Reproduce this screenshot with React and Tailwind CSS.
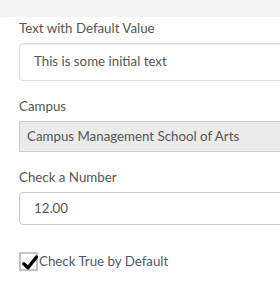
import React from "react";

function App() {
  return (
    <div className="w-[280px] h-[304px] overflow-hidden bg-[#f4f4f4] font-['Lato',sans-serif] text-[13.3px] text-[#555]">
      <div className="mt-[17px] h-[287px] bg-white rounded-tl-[3px] pl-[19px]">
        <div className="pt-[1px] leading-[20px]">Text with Default Value</div>
        <div className="mt-[5px] w-[300px] h-[38px] border border-[#ddd] rounded-[4px] shadow-[inset_0_1px_2px_rgba(0,0,0,0.08)] flex items-center pl-[14px] text-[#555]">
          This is some initial text
        </div>

        <div className="mt-[15px] leading-[20px]">Campus</div>
        <div className="mt-[5px] w-[300px] h-[31px] border border-[#ccc] bg-[#ebebeb] flex items-center pl-[7px]">
          Campus Management School of Arts
        </div>

        <div className="mt-[15px] leading-[20px]">Check a Number</div>
        <div className="mt-[5px] w-[300px] h-[33px] border border-[#ccc] rounded-[4px] flex items-center pl-[14px]">
          12.00
        </div>

        <div className="mt-[27px] flex items-center">
          <div className="relative w-[19px] h-[19px] border-2 border-[#c4c4c4] bg-white">
            <svg className="absolute left-[1px] top-[1px]" width="16" height="15" viewBox="0 0 16 15">
              <path d="M1.8 8.8 L6 12.8 L14.5 2" fill="none" stroke="#000" strokeWidth="3.4" strokeLinecap="round" strokeLinejoin="round" />
            </svg>
          </div>
          <span className="ml-[1px] text-[#4f5a6e]">Check True by Default</span>
        </div>
      </div>
    </div>
  );
}

export default App;
